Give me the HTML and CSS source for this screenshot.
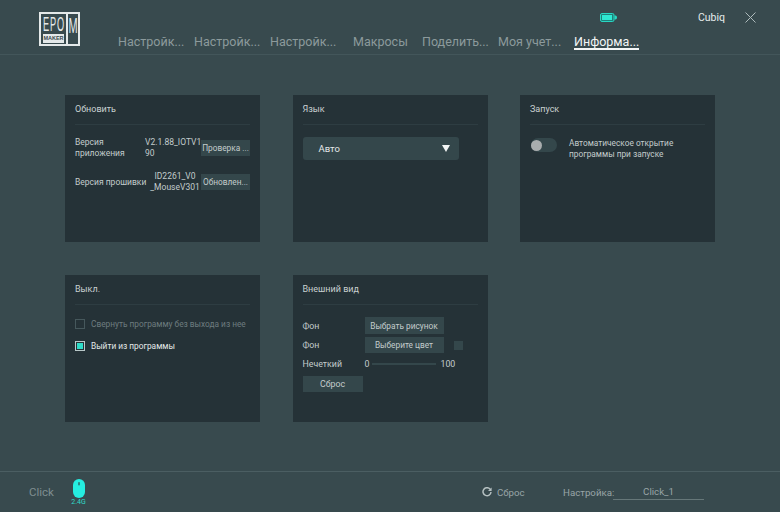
FILE: index.html
```html
<!DOCTYPE html>
<html lang="ru">

<head>
    <meta charset="UTF-8">
    <meta name="viewport" content="width=device-width, initial-scale=1.0">
    <title>Epomaker</title>
    <link rel="stylesheet" href="styles.css">
</head>

<body>
    <div id="app">
        <header id="top-bar">
            <div class="logo">
                <div class="logo-left">
                    <span class="logo-epo">EPO</span>
                    <span class="logo-maker">MAKER</span>
                </div>
                <span class="logo-m">M</span>
            </div>
            <div class="top-right">
                <div class="status-row">
                    <svg class="battery" width="17" height="9" viewBox="0 0 17 9">
                        <rect x="0.5" y="0.5" width="13.5" height="8" rx="1.5" fill="#1f7f78" stroke="#27d8c4"/>
                        <rect x="2" y="2" width="10" height="5" fill="#2fe8d2"/>
                        <path d="M14.5 2.5h1a1.5 2 0 0 1 0 4h-1z" fill="#27d8c4"/>
                    </svg>
                    <span class="user-name">Cubiq</span>
                    <svg class="close-icon" width="11" height="11" viewBox="0 0 11 11">
                        <path d="M0.5 0.5l10 10M10.5 0.5l-10 10" stroke="#aebbbc" stroke-width="1"/>
                    </svg>
                </div>
                <nav class="tabs">
                    <a class="tab tab-w76">Настройк...</a>
                    <a class="tab tab-w76">Настройк...</a>
                    <a class="tab tab-w83">Настройк...</a>
                    <a class="tab tab-w69">Макросы</a>
                    <a class="tab tab-w76">Поделить...</a>
                    <a class="tab tab-w76">Моя учет...</a>
                    <a class="tab active">Информа...</a>
                </nav>
            </div>
        </header>

        <main id="cards">
            <section class="card">
                <h2 class="card-title">Обновить</h2>
                <div class="version-row first">
                    <span class="version-label">Версия<br>приложения</span>
                    <span class="version-value">V2.1.88_IOTV1<br>90</span>
                    <button class="btn btn-small">Проверка ...</button>
                </div>
                <div class="version-row">
                    <span class="version-label">Версия прошивки</span>
                    <span class="version-value center">ID2261_V0<br>_MouseV301</span>
                    <button class="btn btn-small">Обновлен...</button>
                </div>
            </section>

            <section class="card">
                <h2 class="card-title">Язык</h2>
                <div class="select">
                    <span>Авто</span>
                    <span class="select-arrow"></span>
                </div>
            </section>

            <section class="card">
                <h2 class="card-title">Запуск</h2>
                <div class="startup-row">
                    <div class="toggle"><span class="toggle-knob"></span></div>
                    <p class="startup-text">Автоматическое открытие<br>программы при запуске</p>
                </div>
            </section>

            <section class="card">
                <h2 class="card-title">Выкл.</h2>
                <div class="check-row first muted">
                    <span class="checkbox"></span>
                    <span>Свернуть программу без выхода из нее</span>
                </div>
                <div class="check-row selected">
                    <span class="checkbox checked"></span>
                    <span>Выйти из программы</span>
                </div>
            </section>

            <section class="card">
                <h2 class="card-title">Внешний вид</h2>
                <div class="look-row first">
                    <span class="look-label">Фон</span>
                    <button class="btn btn-look">Выбрать рисунок</button>
                </div>
                <div class="look-row">
                    <span class="look-label">Фон</span>
                    <button class="btn btn-look">Выберите цвет</button>
                    <span class="swatch"></span>
                </div>
                <div class="look-row">
                    <span class="look-label">Нечеткий</span>
                    <span>0</span>
                    <span class="slider-track"></span>
                    <span>100</span>
                </div>
                <button class="btn btn-reset">Сброс</button>
            </section>
        </main>

        <footer id="bottom-bar">
            <span class="device-name">Click</span>
            <div class="device">
                <svg width="12" height="19" viewBox="0 0 12 19">
                    <rect x="0" y="0" width="12" height="19" rx="6" fill="#25eee0"/>
                    <rect x="5.2" y="3" width="1.6" height="3.5" rx="0.8" fill="#2a6f70"/>
                </svg>
                <span class="device-mode">2.4G</span>
            </div>
            <div class="reset-link">
                <svg width="10" height="10" viewBox="0 0 10 10">
                    <path d="M8.3 2.4A4 4 0 1 0 9 5" fill="none" stroke="#b5c0c1" stroke-width="1.5"/>
                    <path d="M9.6 0.4v3.6H6z" fill="#b5c0c1"/>
                </svg>
                <span>Сброс</span>
            </div>
            <div class="profile">
                <span class="profile-label">Настройка:</span>
                <span class="profile-input">Click_1</span>
            </div>
        </footer>
    </div>
</body>

</html>
```

FILE: styles.css
```css
/* page */
body {
    margin: 0;
    padding: 0;
    background-color: #384a4e;
    font-family: Roboto, "Open Sans", sans-serif;
    color: #c3cccc;
}

#app {
    width: 780px;
    height: 512px;
    display: flex;
    flex-direction: column;
    overflow: hidden;
}

/* header */
#top-bar {
    height: 55px;
    box-sizing: border-box;
    border-bottom: 1px solid #43565a;
    display: flex;
    flex: none;
}

.logo {
    width: 41px;
    height: 34px;
    margin: 12px 0 0 39px;
    display: flex;
    flex: none;
    box-sizing: border-box;
    border: 2px solid #e4e9e9;
    color: #e4e9e9;
    font-family: "Liberation Sans", sans-serif;
}

.logo-left {
    width: 27px;
    flex: none;
    box-sizing: border-box;
    padding: 2px 2px 1px 2px;
    display: flex;
    flex-direction: column;
    border-right: 2px solid #e4e9e9;
}

.logo-epo {
    display: block;
    height: 17px;
    font-size: 20px;
    line-height: 17px;
    letter-spacing: 2px;
    white-space: nowrap;
    transform: scaleX(0.46);
    transform-origin: left center;
}

.logo-maker {
    height: 9px;
    margin-top: 1px;
    font-size: 5.5px;
    line-height: 9px;
    font-weight: bold;
    text-align: center;
    background-color: #e4e9e9;
    color: #384a4e;
}

.logo-m {
    width: 10px;
    min-width: 0;
    display: flex;
    justify-content: center;
    font-size: 22px;
    line-height: 24px;
    transform: scaleX(0.5);
}

.top-right {
    flex: 1;
    margin-left: 38px;
    display: flex;
    flex-direction: column;
}

.status-row {
    height: 34px;
    display: flex;
    align-items: center;
    box-sizing: border-box;
}

.battery {
    margin-left: 482px;
}

.user-name {
    margin-left: 81px;
    font-size: 10.5px;
    color: #e6ecec;
}

.close-icon {
    margin-left: 20px;
}

.tabs {
    display: flex;
    font-size: 12.5px;
    color: #8c9a9c;
}

.tab {
    line-height: 16px;
    white-space: nowrap;
}

.tab-w76 {
    width: 76px;
}

.tab-w83 {
    width: 83px;
}

.tab-w69 {
    width: 69px;
}

.tab.active {
    color: #f2f5f5;
    border-bottom: 2px solid #f2f5f5;
    height: 14px;
}

/* cards */
#cards {
    flex: 1;
    display: grid;
    grid-template-columns: repeat(3, 195px);
    grid-template-rows: repeat(2, 147px);
    column-gap: 32.5px;
    row-gap: 33px;
    padding: 40px 0 0 65px;
}

.card {
    background-color: #253237;
    padding: 0 10px;
    font-size: 8.3px;
}

.card-title {
    margin: 0;
    height: 29px;
    line-height: 29px;
    font-size: 9px;
    font-weight: normal;
    color: #c9d1d1;
    border-bottom: 1px solid #2e3d42;
}

.btn {
    border: none;
    padding: 0;
    margin: 0;
    font-family: inherit;
    font-size: 8.3px;
    color: #c3cccc;
    background-color: #34474b;
    white-space: nowrap;
}

/* update card */
.version-row {
    display: grid;
    grid-template-columns: 70px 56px 49px;
    align-items: center;
    height: 30px;
    margin-top: 4px;
    font-size: 8.5px;
}

.version-row.first {
    margin-top: 8px;
}

.version-label {
    line-height: 11px;
    white-space: nowrap;
}

.version-value {
    line-height: 11px;
    white-space: nowrap;
}

.version-value.center {
    text-align: center;
    padding-left: 4px;
}

.btn-small {
    height: 16px;
}

/* language */
.select {
    margin-top: 12px;
    width: 156px;
    height: 23px;
    box-sizing: border-box;
    padding: 0 9px 0 16px;
    border-radius: 3px;
    background-color: #34474b;
    display: flex;
    align-items: center;
    justify-content: space-between;
    font-size: 9.5px;
    color: #e4e9e9;
}

.select-arrow {
    width: 0;
    height: 0;
    border-left: 4px solid transparent;
    border-right: 4px solid transparent;
    border-top: 7px solid #f2f5f5;
}

/* startup */
.startup-row {
    display: flex;
    margin-top: 13px;
}

.toggle {
    width: 26px;
    height: 14px;
    margin-left: 1px;
    border-radius: 7px;
    background-color: #34474b;
    display: flex;
    align-items: center;
    flex: none;
}

.toggle-knob {
    width: 11px;
    height: 11px;
    border-radius: 50%;
    background-color: #a9adae;
}

.startup-text {
    margin: 0 0 0 12px;
    line-height: 11px;
}

/* exit */
.check-row {
    display: flex;
    align-items: center;
    gap: 6px;
    height: 12px;
    margin-top: 10px;
    white-space: nowrap;
}

.check-row.first {
    margin-top: 13px;
}

.check-row.muted {
    color: #6d7c7f;
}

.check-row.selected {
    color: #e4e9e9;
}

.checkbox {
    width: 10px;
    height: 10px;
    box-sizing: border-box;
    border: 1px solid #46585c;
    flex: none;
}

.checkbox.checked {
    border-color: #b9c8c8;
    background-color: #2fdcc8;
    box-shadow: inset 0 0 0 1px #253237;
}

/* look */
.look-row {
    display: flex;
    align-items: center;
    margin-top: 3px;
    height: 16px;
    font-size: 8.8px;
}

.look-row.first {
    margin-top: 12px;
    height: 17px;
}

.look-label {
    width: 62px;
}

.btn-look {
    width: 79px;
    height: 100%;
}

.swatch {
    width: 9px;
    height: 9px;
    margin-left: 10px;
    background-color: #34474b;
}

.slider-track {
    width: 64px;
    height: 2px;
    margin: 0 4px 0 3px;
    background-color: #34474b;
}

.btn-reset {
    display: block;
    width: 60px;
    height: 16px;
    margin-top: 4px;
    font-size: 8.8px;
}

/* footer */
#bottom-bar {
    height: 41px;
    box-sizing: border-box;
    border-top: 1px solid #4b5e62;
    flex: none;
    display: flex;
    align-items: center;
    font-size: 9.7px;
    color: #8c9a9c;
}

.device-name {
    margin-left: 29px;
    width: 42px;
    font-size: 11.5px;
    color: #7f8e90;
}

.device {
    width: 15px;
    display: flex;
    flex-direction: column;
    align-items: center;
    color: #2fdcc8;
    margin-top: 1px;
}

.device-mode {
    font-size: 7px;
    line-height: 8px;
}

.reset-link {
    margin-left: 396px;
    display: flex;
    align-items: center;
    gap: 5px;
    width: 81px;
    color: #98a5a7;
}

.profile {
    display: flex;
    align-items: center;
    color: #98a5a7;
}

.profile-label {
    width: 50px;
    white-space: nowrap;
}

.profile-input {
    width: 91px;
    height: 14px;
    line-height: 13px;
    margin-top: 1px;
    text-align: center;
    border-bottom: 1px solid #667779;
}
```
